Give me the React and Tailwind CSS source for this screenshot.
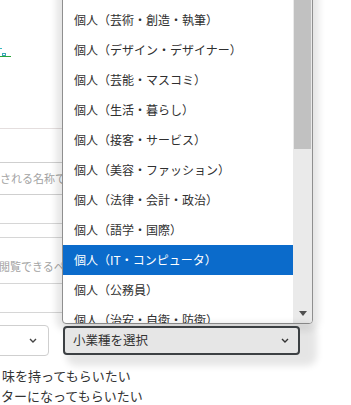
import React from "react";

const items = [
  "個人（スポーツ・健康）",
  "個人（芸術・創造・執筆）",
  "個人（デザイン・デザイナー）",
  "個人（芸能・マスコミ）",
  "個人（生活・暮らし）",
  "個人（接客・サービス）",
  "個人（美容・ファッション）",
  "個人（法律・会計・政治）",
  "個人（語学・国際）",
  "個人（IT・コンピュータ）",
  "個人（公務員）",
  "個人（治安・自衛・防衛）",
];
const selected = "個人（IT・コンピュータ）";

function Chevron({ className }) {
  return (
    <svg className={className} width="8" height="5" viewBox="0 0 8 5" fill="none">
      <polyline points="1,1 4,4 7,1" stroke="currentColor" strokeWidth="1.4" />
    </svg>
  );
}

export default function App() {
  return (
    <div
      className="relative w-[351px] h-[405px] overflow-hidden bg-white text-[#333]"
      style={{ fontFamily: '"Noto Sans CJK JP", "Noto Sans", sans-serif' }}
    >
      {/* page underneath, cut by the popup */}
      <div className="flex flex-col w-[290px]">
        <div className="h-[128px] pt-[48px]">
          <div className="w-[2px] h-px bg-[#3bb8c4]" />
          <div className="ml-[2px] mt-[4px] w-[4px] h-[3px] border border-[#3aa8b8]" />
          <div className="w-[11px] h-px bg-[#2aa53a]" />
        </div>
        <div className="h-px bg-[#e4dede]" />

        <div className="mt-[33px] h-[33px] -ml-[10px] pl-[9px] border border-[#cfcfcf] rounded flex items-center text-[11px] text-[#a3a3a3] whitespace-nowrap overflow-hidden">
          される名称で検索
        </div>
        <div className="mt-[28px] h-px bg-[#d6d6d6]" />
        <div className="mt-[13px] h-[47px] -ml-[10px] pl-[9px] pt-[20px] border-y border-[#d6d6d6] text-[11px] leading-[16px] text-[#a3a3a3] whitespace-nowrap overflow-hidden">
          閲覧できるページ
        </div>
        <div className="mt-[28px] h-px bg-[#d6d6d6]" />

        <div className="mt-[12px] h-[31px] -ml-[100px] w-[149px] border border-[#cfcfcf] rounded flex items-center justify-end pr-[11px] text-[#444]">
          <Chevron />
        </div>

        <div className="mt-[10px] pl-[2px] text-[13px] leading-[20px] whitespace-nowrap">味を持ってもらいたい</div>
        <div className="pl-[1px] text-[13px] leading-[20px] whitespace-nowrap">ターになってもらいたい</div>
      </div>

      {/* open native select popup */}
      <div className="absolute left-[62px] top-[-26px] w-[251px] h-[350px] bg-white border border-[#8f8f8f] rounded-b-[4px] overflow-hidden flex shadow-[0_0_7px_6px_rgba(0,0,0,0.1)]">
        <div className="w-[230px] flex flex-col">
          {items.map((t) => (
            <div
              key={t}
              className={
                "h-[30px] shrink-0 pl-[11px] flex items-center text-[12px] " +
                (t === selected ? "bg-[#0b6bcb] text-white" : "text-[#2f2f2f]")
              }
            >
              {t}
            </div>
          ))}
        </div>
        <div className="w-[19px] bg-[#eaeaea] flex flex-col">
          <div className="ml-[1px] w-[17px] h-[174px] bg-[#c1c1c1]" />
          <div className="flex-1" />
          <div className="h-[20px] flex items-center justify-center">
            <div className="w-0 h-0 border-l-[4px] border-r-[4px] border-t-[5px] border-l-transparent border-r-transparent border-t-[#505050]" />
          </div>
        </div>
      </div>

      <div className="absolute left-[63px] top-[326px] w-[237px] h-[29px] bg-[#e6e6e6] border-2 border-[#3c4043] rounded-[4px] flex items-center justify-between pl-[8px] pr-[9px] text-[12.5px] text-[#333] shadow-[10px_4px_7px_7px_rgba(0,0,0,0.1)]">
        <span>小業種を選択</span>
        <Chevron className="text-[#333]" />
      </div>
    </div>
  );
}
